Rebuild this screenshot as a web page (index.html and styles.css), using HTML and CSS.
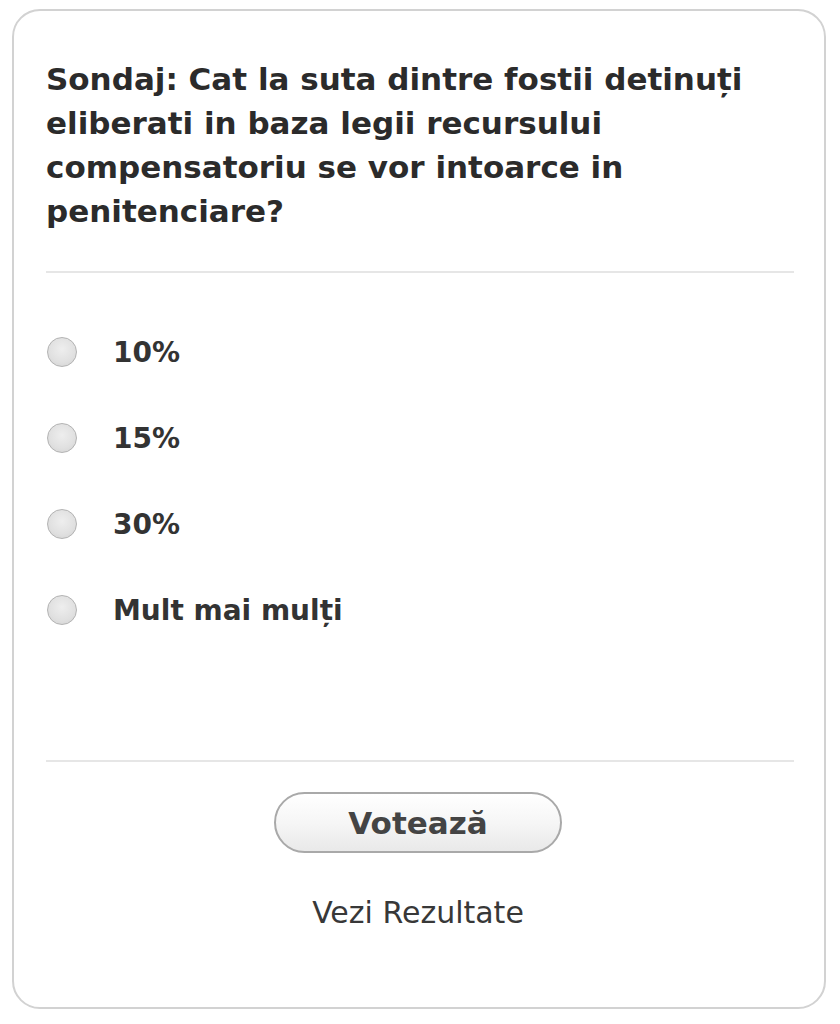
FILE: index.html
```html
<!DOCTYPE html>
<html lang="ro">
<head>
<meta charset="utf-8">
<title>Sondaj</title>
<link rel="stylesheet" href="styles.css">
</head>
<body>
<div class="card">
  <h2 class="question">Sondaj: Cat la suta dintre fostii detinuți eliberati in baza legii recursului compensatoriu se vor intoarce in penitenciare?</h2>
  <hr class="divider">
  <ul class="options">
    <li class="option"><span class="radio"></span><span class="label">10%</span></li>
    <li class="option"><span class="radio"></span><span class="label">15%</span></li>
    <li class="option"><span class="radio"></span><span class="label">30%</span></li>
    <li class="option"><span class="radio"></span><span class="label">Mult mai mulți</span></li>
  </ul>
  <hr class="divider">
  <div class="actions">
    <button class="vote">Votează</button>
    <a class="results">Vezi Rezultate</a>
  </div>
</div>
</body>
</html>
```

FILE: styles.css
```css
html, body {
  margin: 0;
  padding: 0;
  background: #ffffff;
}
body {
  font-family: "DejaVu Sans", Verdana, sans-serif;
  color: #333333;
  padding: 9px 14px 12px 12px;
}
.card {
  box-sizing: border-box;
  height: 1000px;
  border: 2px solid #d2d2d2;
  border-radius: 28px;
  padding: 46px 30px 0 32px;
}
.question {
  margin: 0;
  font-size: 31px;
  line-height: 44px;
  font-weight: bold;
  color: #2b2b2b;
  padding-right: 10px;
}
.divider {
  border: 0;
  height: 2px;
  background: #e6e6e6;
  margin: 0;
}
.question + .divider {
  margin-top: 38px;
}
.options {
  list-style: none;
  margin: 0;
  padding: 61px 0 0 1px;
  height: 487px;
  box-sizing: border-box;
  display: flex;
  flex-direction: column;
  gap: 50px;
}
.option {
  display: flex;
  align-items: center;
  height: 36px;
  gap: 36px;
}
.radio {
  width: 28px;
  height: 28px;
  border-radius: 50%;
  border: 1px solid #b3b3b3;
  background: radial-gradient(circle at 50% 40%, #eeeeee 0%, #e0e0e0 60%, #d0d0d0 100%);
  flex: none;
}
.label {
  font-size: 28px;
  font-weight: bold;
  color: #333333;
}
.actions {
  display: flex;
  flex-direction: column;
  align-items: center;
  padding-top: 30px;
  padding-right: 4px;
}
.vote {
  width: 288px;
  height: 61px;
  border-radius: 31px;
  border: 2px solid #a9a9a9;
  background: linear-gradient(#ffffff, #f6f6f6 50%, #e9e9e9);
  font-family: "DejaVu Sans", Verdana, sans-serif;
  font-size: 31px;
  font-weight: bold;
  color: #444444;
  padding: 0;
}
.results {
  margin-top: 42px;
  font-size: 30px;
  color: #383838;
}
```
